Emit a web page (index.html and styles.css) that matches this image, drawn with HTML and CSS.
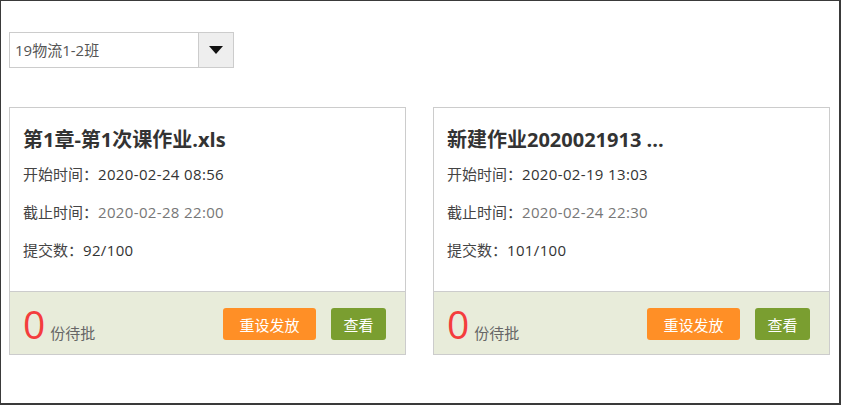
FILE: index.html
```html
<!DOCTYPE html>
<html lang="zh">
<head>
<meta charset="utf-8">
<link rel="stylesheet" href="styles.css">
</head>
<body>
<div class="frame">
  <div class="select">
    <span class="select-text">19物流1-2班</span>
    <span class="select-btn"><span class="caret"></span></span>
  </div>
  <div class="cards">
    <div class="card">
      <div class="card-body">
        <div class="title">第1章-第1次课作业.xls</div>
        <div class="row">开始时间：<span class="val">2020-02-24 08:56</span></div>
        <div class="row">截止时间：<span class="val muted">2020-02-28 22:00</span></div>
        <div class="row">提交数：<span class="val">92/100</span></div>
      </div>
      <div class="card-foot">
        <div class="pending"><span class="num">0</span><span class="unit">份待批</span></div>
        <div class="actions">
          <button class="btn btn-orange">重设发放</button>
          <button class="btn btn-green">查看</button>
        </div>
      </div>
    </div>
    <div class="card">
      <div class="card-body">
        <div class="title">新建作业2020021913 ...</div>
        <div class="row">开始时间：<span class="val">2020-02-19 13:03</span></div>
        <div class="row">截止时间：<span class="val muted">2020-02-24 22:30</span></div>
        <div class="row">提交数：<span class="val">101/100</span></div>
      </div>
      <div class="card-foot">
        <div class="pending"><span class="num">0</span><span class="unit">份待批</span></div>
        <div class="actions">
          <button class="btn btn-orange">重设发放</button>
          <button class="btn btn-green">查看</button>
        </div>
      </div>
    </div>
  </div>
</div>
</body>
</html>
```
FILE: styles.css
```css
* { box-sizing: border-box; }
html, body { margin: 0; padding: 0; background: #fff; }
body {
  font-family: "Open Sans", "Noto Sans CJK SC", sans-serif;
  color: #333;
}
.frame {
  width: 841px;
  height: 405px;
  border: 1px solid #3a3a3a;
  border-right-width: 2px;
  border-bottom-width: 2px;
  padding: 31px 8px 0 8px;
}
.select {
  display: flex;
  width: 225px;
  height: 36px;
  border: 1px solid #ccc;
  background: #fff;
}
.select-text {
  flex: 1;
  font-size: 15px;
  line-height: 34px;
  padding-left: 5px;
  color: #555;
}
.select-btn {
  width: 35px;
  background: #eee;
  border-left: 1px solid #ccc;
  display: flex;
  align-items: center;
  justify-content: center;
}
.caret {
  width: 0; height: 0;
  border-left: 7px solid transparent;
  border-right: 7px solid transparent;
  border-top: 8px solid #111;
}
.cards {
  display: flex;
  gap: 27px;
  margin-top: 39px;
}
.card {
  width: 397px;
  border: 1px solid #ccc;
  background: #fff;
}
.card-body {
  padding: 17px 14px 22px 13px;
}
.title {
  font-size: 20px;
  font-weight: 700;
  line-height: 30px;
  height: 30px;
  color: #333;
}
.row {
  font-size: 15px;
  line-height: 38px;
  height: 38px;
  color: #444;
}
.val { font-size: 15px; color: #333; letter-spacing: 0.35px; }
.val.muted { color: #777; }
.card-foot {
  border-top: 1px solid #ccc;
  background: #e8ecda;
  height: 63px;
  padding: 16px 19px 0 13px;
  display: flex;
  justify-content: space-between;
  align-items: flex-start;
}
.pending { display: flex; align-items: baseline; }
.num {
  font-size: 39px;
  line-height: 32px;
  color: #f43d3d;
}
.unit {
  font-size: 15px;
  color: #666;
  margin-left: 5px;
}
.actions { display: flex; gap: 15px; }
.btn {
  border: 0;
  height: 32px;
  border-radius: 3px;
  color: #fff;
  font-family: inherit;
  font-size: 15px;
  padding: 0;
  cursor: pointer;
}
.btn-orange { width: 93px; background: #ff8f26; }
.btn-green { width: 55px; background: #7a9e30; }
```
